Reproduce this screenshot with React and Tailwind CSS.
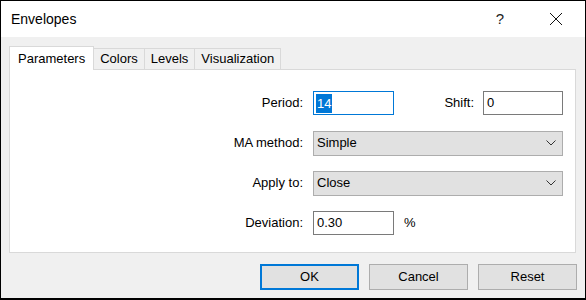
import React from "react";

function Chevron() {
  return (
    <svg width="10" height="6" viewBox="0 0 10 6" className="shrink-0">
      <path d="M0.5 0.5 L5 5 L9.5 0.5" fill="none" stroke="#333" strokeWidth="1" />
    </svg>
  );
}

function Select({ value }) {
  return (
    <div className="flex h-[25px] w-[250px] items-center justify-between border border-[#adadad] bg-[#e1e1e1] pl-[3px] pr-[6px]">
      <span>{value}</span>
      <Chevron />
    </div>
  );
}

function Row({ label, children, first }) {
  return (
    <div className={`flex h-[24px] items-center ${first ? "" : "mt-[16px]"}`}>
      <div className="w-[293px] text-right">{label}</div>
      <div className="ml-[10px] flex items-center">{children}</div>
    </div>
  );
}

function Button({ children, primary }) {
  return (
    <div
      className={`flex h-[26px] w-[99px] items-center justify-center bg-[#e1e1e1] ${
        primary ? "border-2 border-[#0078d7]" : "border border-[#adadad]"
      }`}
    >
      {children}
    </div>
  );
}

export default function App() {
  const tabs = ["Colors", "Levels", "Visualization"];
  return (
    <div className="h-[300px] w-[586px] bg-black px-px pb-[2px] pt-px font-['Liberation_Sans',Arial,sans-serif] text-[13px] text-black">
      <div className="flex h-full flex-col bg-[#f0f0f0]">
        {/* title bar */}
        <div className="flex h-[36px] items-center bg-white pl-[10px]">
          <div className="text-[14px]">Envelopes</div>
          <div className="ml-auto mr-[45px] text-[15px] text-[#222]">?</div>
          <svg width="14" height="14" viewBox="0 0 14 14" className="mr-[22px]">
            <path d="M1 1 L13 13 M13 1 L1 13" stroke="#111" strokeWidth="1" />
          </svg>
        </div>

        {/* body */}
        <div className="ml-[8px] mr-[9px] pt-[9px]">
          <div className="flex items-end">
            <div className="relative z-10 -mb-px flex h-[24px] items-center border border-b-0 border-[#d9d9d9] bg-white px-[8px]">
              Parameters
            </div>
            {tabs.map((t) => (
              <div
                key={t}
                className="-ml-px flex h-[21px] items-center border border-b-0 border-[#d9d9d9] bg-[#f0f0f0] px-[6px]"
              >
                {t}
              </div>
            ))}
          </div>
          <div className="h-[184px] border border-[#d9d9d9] bg-white pt-[21px]">
            <Row label="Period:" first>
              <div className="flex h-[24px] w-[81px] items-center border border-[#0078d7] bg-white pl-[2px]">
                <span className="bg-[#0078d7] px-px leading-[19px] text-white">14</span>
              </div>
              <div className="w-[80px] text-right">Shift:</div>
              <div className="ml-[9px] flex h-[24px] w-[80px] items-center border border-[#7a7a7a] bg-white pl-[3px]">
                0
              </div>
            </Row>
            <Row label="MA method:">
              <Select value="Simple" />
            </Row>
            <Row label="Apply to:">
              <Select value="Close" />
            </Row>
            <Row label="Deviation:">
              <div className="flex h-[24px] w-[81px] items-center border border-[#7a7a7a] bg-white pl-[3px]">
                0.30
              </div>
              <div className="ml-[10px]">%</div>
            </Row>
          </div>
        </div>

        {/* buttons */}
        <div className="mt-[11px] flex justify-end gap-[10px] pr-[8px]">
          <Button primary>OK</Button>
          <Button>Cancel</Button>
          <Button>Reset</Button>
        </div>
      </div>
    </div>
  );
}
